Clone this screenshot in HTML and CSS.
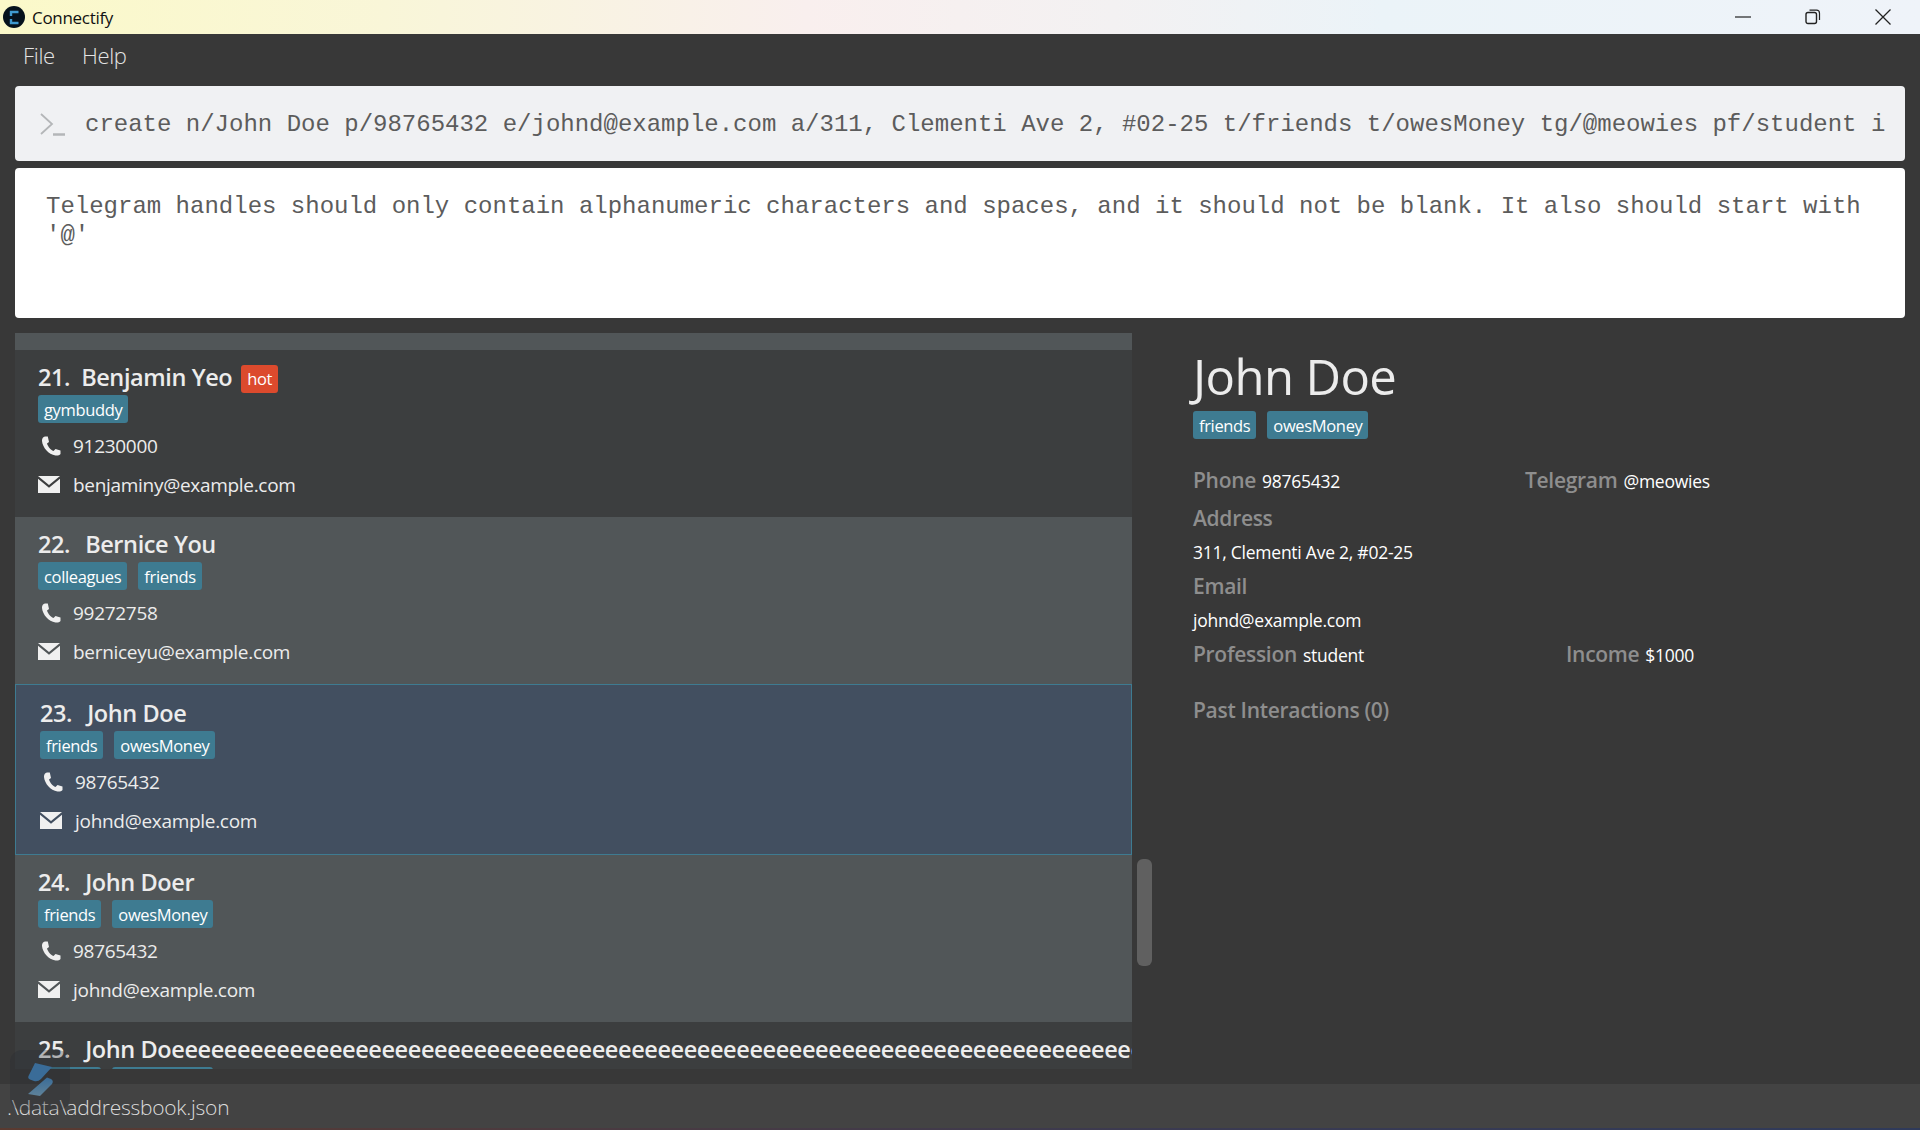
FILE: index.html
```html
<!DOCTYPE html>
<html lang="en">
<head>
<meta charset="utf-8">
<title>Connectify</title>
<link rel="stylesheet" href="styles.css">
</head>
<body>
<div class="app">
  <header class="titlebar">
    <svg class="logo" viewBox="0 0 22 22" width="22" height="22"><circle cx="11" cy="11" r="11" fill="#06121c"/><path d="M15.500 6H8v4M8 13v4h7.500" fill="none" stroke="#3f9ad0" stroke-width="2.400"/></svg>
    <span class="app-name">Connectify</span>
    <div class="window-controls">
      <svg viewBox="0 0 16 16" width="16" height="16"><path d="M0 8H16" stroke="#222" stroke-width="1.200"/></svg>
      <svg viewBox="0 0 16 16" width="16" height="16"><rect x="1" y="3.500" width="10.500" height="11" rx="2" fill="none" stroke="#222" stroke-width="1.400"/><path d="M4.500 1.200h7a3 3 0 0 1 3 3V11" fill="none" stroke="#222" stroke-width="1.200"/></svg>
      <svg viewBox="0 0 16 16" width="16" height="16"><path d="M.5.5L15.500 15.500M15.500.5L.5 15.500" stroke="#222" stroke-width="1.300"/></svg>
    </div>
  </header>
  <nav class="menubar"><span>File</span><span>Help</span></nav>
  <section class="command">
    <svg class="prompt" viewBox="0 0 26 24" width="26" height="24"><path d="M1 2l11 10L1 22" fill="none" stroke="#b4b6b8" stroke-width="1.800"/><path d="M13 22.500h12" stroke="#b4b6b8" stroke-width="2.400"/></svg>
    <span class="command-text">create n/John Doe p/98765432 e/johnd@example.com a/311, Clementi Ave 2, #02-25 t/friends t/owesMoney tg/@meowies pf/student i</span>
  </section>
  <section class="result">Telegram handles should only contain alphanumeric characters and spaces, and it should not be blank. It also should start with '@'</section>
  <main class="main">
    <div class="list">
      <div class="list-head"></div>
      <article class="card card-odd">
        <div class="name-line"><span class="num num-tight">21.</span><span>Benjamin Yeo</span><span class="tag tag-hot">hot</span></div>
        <div class="tags"><span class="tag">gymbuddy</span></div>
        <div class="info"><svg class="icon" viewBox="0 0 20 20"><use href="#phone"/></svg>91230000</div>
        <div class="info"><svg class="icon icon-mail" viewBox="0 0 22 17"><use href="#mail"/></svg>benjaminy@example.com</div>
      </article>
      <article class="card card-even">
        <div class="name-line"><span class="num">22.</span><span>Bernice You</span></div>
        <div class="tags"><span class="tag">colleagues</span><span class="tag">friends</span></div>
        <div class="info"><svg class="icon" viewBox="0 0 20 20"><use href="#phone"/></svg>99272758</div>
        <div class="info"><svg class="icon icon-mail" viewBox="0 0 22 17"><use href="#mail"/></svg>berniceyu@example.com</div>
      </article>
      <article class="card card-selected">
        <div class="name-line"><span class="num">23.</span><span>John Doe</span></div>
        <div class="tags"><span class="tag">friends</span><span class="tag">owesMoney</span></div>
        <div class="info"><svg class="icon" viewBox="0 0 20 20"><use href="#phone"/></svg>98765432</div>
        <div class="info"><svg class="icon icon-mail" viewBox="0 0 22 17"><use href="#mail"/></svg>johnd@example.com</div>
      </article>
      <article class="card card-even">
        <div class="name-line"><span class="num">24.</span><span>John Doer</span></div>
        <div class="tags"><span class="tag">friends</span><span class="tag">owesMoney</span></div>
        <div class="info"><svg class="icon" viewBox="0 0 20 20"><use href="#phone"/></svg>98765432</div>
        <div class="info"><svg class="icon icon-mail" viewBox="0 0 22 17"><use href="#mail"/></svg>johnd@example.com</div>
      </article>
      <article class="card card-odd">
        <div class="name-line"><span class="num">25.</span><span>John Doeeeeeeeeeeeeeeeeeeeeeeeeeeeeeeeeeeeeeeeeeeeeeeeeeeeeeeeeeeeeeeeeeeeeeeeeeeeeeeeeeeeeeeeeee</span></div>
        <div class="tags"><span class="tag">friends</span><span class="tag">owesMoney</span></div>
      </article>
    </div>
    <div class="scroll-track"><div class="scroll-thumb"></div></div>
    <aside class="detail">
      <h1 class="detail-name">John Doe</h1>
      <div class="tags detail-tags"><span class="tag">friends</span><span class="tag">owesMoney</span></div>
      <div class="field-row">
        <div class="field"><span class="label">Phone</span><span class="value">98765432</span></div>
        <div class="field field-telegram"><span class="label">Telegram</span><span class="value">@meowies</span></div>
      </div>
      <div class="label-row label">Address</div>
      <div class="value-row value">311, Clementi Ave 2, #02-25</div>
      <div class="label-row label">Email</div>
      <div class="value-row value">johnd@example.com</div>
      <div class="field-row field-row-last">
        <div class="field"><span class="label">Profession</span><span class="value">student</span></div>
        <div class="field field-income"><span class="label">Income</span><span class="value">$1000</span></div>
      </div>
      <div class="label past">Past Interactions (0)</div>
    </aside>
  </main>
  <footer class="status">.\data\addressbook.json</footer>
  <div class="desktop-edge"></div>
</div>
<div class="float-badge">
  <svg viewBox="0 0 60 60" width="60" height="60">
    <defs><linearGradient id="fade" x1="0" y1="0" x2="0" y2="1"><stop offset="0" stop-color="#3a6c98"/><stop offset="1" stop-color="#5f8299"/></linearGradient></defs>
    <path d="M25 13L42 17L31 29Q28 32 24 31L20 29.500Q17 28 19 25Z" fill="#3a6c98"/>
    <path d="M37 27.500L41 29Q44 31 42 34L30 46L18 44Z" fill="url(#fade)"/>
  </svg>
</div>
<svg class="defs" width="0" height="0">
  <defs>
    <path id="phone" fill="#f0f0f0" d="M4 .5C2 1 .8 2.800 1 5c.6 6.500 6.500 13.500 13.500 14.500 2 .3 4-.3 5-1.500v-3.500l-5-1.500-2 2c-3-1-5.500-4.500-6.500-7.500l2-1.500L6.800.5z"/>
    <path id="mail" fill="#f0f0f0" d="M0 0h22L11 9zM0 2.800l11 9 11-9V17H0z"/>
  </defs>
</svg>
</body>
</html>
```
FILE: styles.css
```css
* { box-sizing: border-box; }
html, body { margin: 0; height: 100%; }
body { background: #383838; font-family: "Open Sans", "Noto Sans", sans-serif; overflow: hidden; }
.app { display: flex; flex-direction: column; height: 1130px; }

.titlebar { height: 34px; flex: none; display: flex; align-items: center; padding-left: 3px; color: #111; font-size: 17px;
  background: linear-gradient(90deg, #fbf9c9 0%, #f9f6d8 20%, #f9efee 42%, #f3f1f2 58%, #ebf3f8 72%, #eff3f9 100%); }
.logo { flex: none; }
.app-name { margin-left: 7px; letter-spacing: -.3px; }
.window-controls { margin-left: auto; display: flex; gap: 54px; padding-right: 29px; align-items: center; }

.menubar { height: 52px; flex: none; display: flex; gap: 27px; align-items: center; padding: 0 0 10px 23px; color: #e4e4e4; font-size: 22px; font-weight: 300; letter-spacing: -.3px; }

.command { flex: none; margin: 0 15px; height: 75px; border-radius: 4px; background: #f0f1f3; display: flex; align-items: center; padding-left: 25px; font: 24px "Liberation Mono", monospace; color: #5c5c5c; overflow: hidden; white-space: nowrap; }
.prompt { flex: none; margin: 0 19px 0 0; }
.command-text { position: relative; top: 1px; }
.result { flex: none; margin: 7px 15px 0; height: 150px; border-radius: 4px; background: #fff; padding: 24px 30px 0 31px; font: 24px/29px "Liberation Mono", monospace; color: #5c5c5c; }

.main { flex: 1; min-height: 0; display: flex; margin: 15px 0 0 15px; }
.list { width: 1117px; flex: none; height: 736px; overflow: hidden; background: #3c3e3f; }
.list-head { height: 17px; background: #515658; }
.card { padding: 8px 0 12px 23px; color: #ececec; white-space: nowrap; height: 167px; overflow: hidden; }
.card-odd { background: #3c3e3f; }
.card-even { background: #515658; }
.card-selected { background: #424f60; border: 1px solid #3e7b91; padding: 9px 0 13px 24px; height: 171px; }
.name-line { height: 37px; display: flex; align-items: center; gap: 15px; font-size: 23.500px; font-weight: 600; letter-spacing: -.4px; overflow: hidden; }
.num-tight { margin-right: -4px; }
.tag { display: inline-flex; align-items: center; height: 28px; padding: 0 6px; border-radius: 3px; background: #3e7b91; color: #fff; font-size: 16.500px; font-weight: 400; letter-spacing: -.35px; }
.tag-hot { background: #dc4a2d; margin-left: -6px; margin-top: 4px; }
.tags { display: flex; gap: 11px; margin-bottom: 3px; }
.info { height: 39px; display: flex; align-items: center; font-size: 19px; letter-spacing: -.3px; }
.icon { width: 20px; height: 20px; margin: 0 12px 0 3px; flex: none; }
.icon-mail { width: 22px; height: 17px; margin: 0 13px 0 0; }

.scroll-track { width: 61px; flex: none; padding: 526px 0 0 5px; }
.scroll-thumb { width: 15px; height: 107px; border-radius: 6px; background: #606060; }

.detail { flex: 1; padding-top: 12px; color: #fff; }
.detail-name { margin: 0; font-size: 49px; line-height: 62px; font-weight: 500; color: #ececec; letter-spacing: -.6px; height: 66px; }
.detail-tags { margin-bottom: 27px; }
.field-row { display: flex; height: 35px; align-items: baseline; }
.field { display: flex; align-items: baseline; gap: 6px; }
.field-row .field:first-child { width: 332px; flex: none; }
.field-income { margin-left: 41px; }
.field-row-last { margin-top: 3px; }
.label { color: #8e8e8e; font-size: 21px; font-weight: 600; letter-spacing: -.3px; }
.value { color: #fff; font-size: 17.500px; letter-spacing: -.25px; }
.label-row { height: 34px; line-height: 34px; }
.value-row { height: 34px; line-height: 34px; }
.past { margin-top: 21px; }

.status { height: 44px; flex: none; background: #434343; color: #dcdcdc; padding-left: 7px; font-size: 21px; font-weight: 300; letter-spacing: -.25px; line-height: 46px; }
.desktop-edge { height: 2px; flex: none; background: linear-gradient(90deg, #5a3a30, #3b3a50 60%, #2f3a5a); }

.float-badge { position: absolute; left: 10px; top: 1050px; width: 60px; height: 60px; border-radius: 12px; background: rgba(40,44,50,.3); }
.defs { position: absolute; }
```
